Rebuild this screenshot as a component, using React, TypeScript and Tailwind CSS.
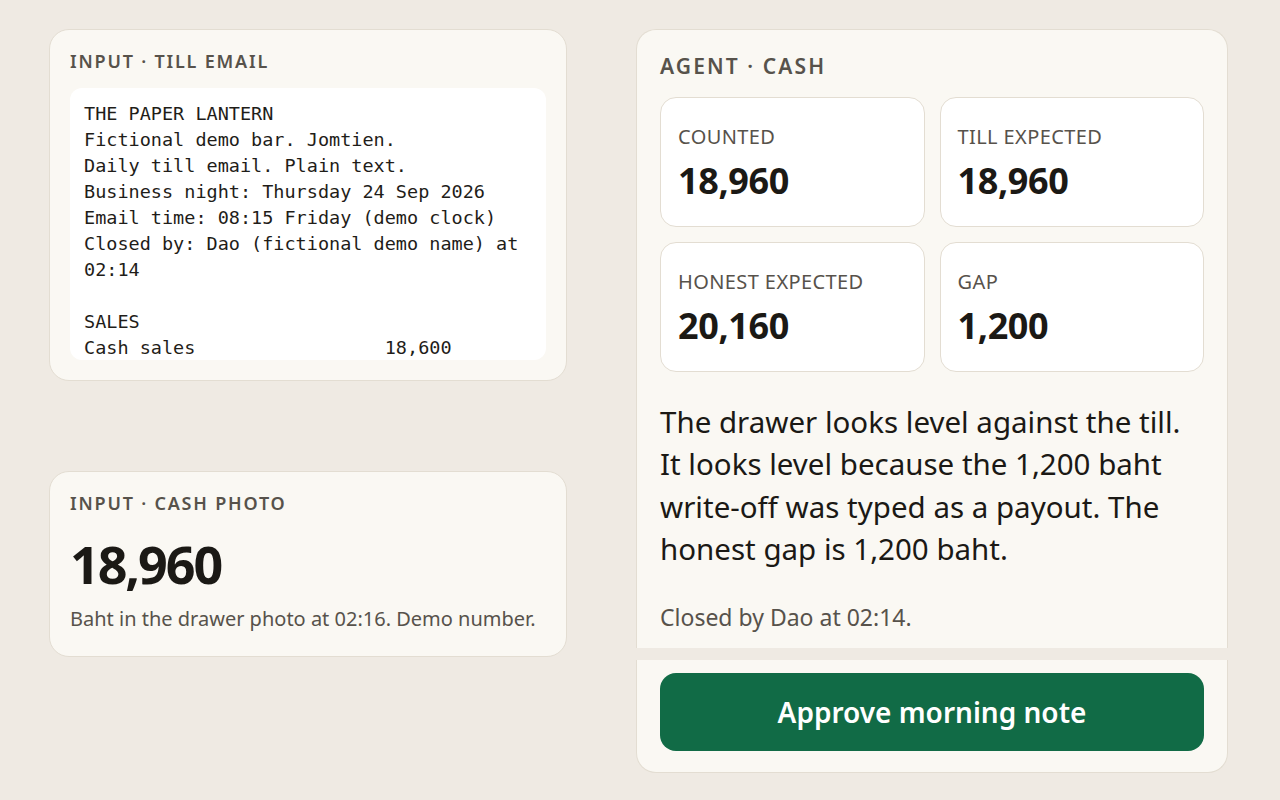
const tillEmail = `THE PAPER LANTERN
Fictional demo bar. Jomtien.
Daily till email. Plain text.
Business night: Thursday 24 Sep 2026
Email time: 08:15 Friday (demo clock)
Closed by: Dao (fictional demo name) at 02:14

SALES
Cash sales                 18,600
Card sales                 24,300
Total sales                42,900`;

const stats = [
  { label: "Counted", value: "18,960" },
  { label: "Till expected", value: "18,960" },
  { label: "Honest expected", value: "20,160" },
  { label: "Gap", value: "1,200" },
];

function Eyebrow({ children, size = "text-[18px]" }: { children: string; size?: string }) {
  return (
    <h2 className={`${size} font-semibold uppercase tracking-[0.1em] text-[#57524b]`}>
      {children}
    </h2>
  );
}

function StatTile({ label, value }: { label: string; value: string }) {
  return (
    <div className="flex h-[130px] flex-col rounded-2xl border border-[#e3ddd2] bg-white px-[17px] pt-[24px]">
      <div className="text-[20px] leading-[30px] uppercase tracking-[0.02em] text-[#57524b]">{label}</div>
      <div className="mt-[11px] text-[36px] font-bold leading-none tracking-[-0.01em] text-[#1b1915]">
        {value}
      </div>
    </div>
  );
}

export default function App() {
  return (
    <div
      className="flex min-h-[800px] gap-[69px] bg-[#efeae3] pl-[49px] pt-[29px]"
      style={{ fontFamily: '"Noto Sans", "Open Sans", sans-serif' }}
    >
      {/* inputs */}
      <div className="flex w-[518px] flex-col gap-[90px]">
        <section className="rounded-[20px] border border-[#e3ddd2] bg-[#faf8f3] px-[20px] pb-[20px] pt-[18px]">
          <Eyebrow>Input · Till email</Eyebrow>
          <pre
            className="mt-[13px] h-[272px] overflow-hidden whitespace-pre-wrap rounded-xl bg-white px-[14px] pt-[13px] text-[18.5px] leading-[26px] text-[#1f1d19]"
            style={{ fontFamily: '"DejaVu Sans Mono", "Liberation Mono", monospace' }}
          >
            {tillEmail}
          </pre>
        </section>

        <section className="rounded-[20px] border border-[#e3ddd2] bg-[#faf8f3] px-[20px] pb-[22px] pt-[18px]">
          <Eyebrow>Input · Cash photo</Eyebrow>
          <div className="mt-[15px] text-[52px] font-bold leading-[64px] tracking-[-0.04em] text-[#1b1915]">
            18,960
          </div>
          <p className="mt-[8px] text-[20px] leading-[30px] text-[#57524b]">
            Baht in the drawer photo at 02:16. Demo number.
          </p>
        </section>
      </div>

      {/* agent */}
      <div className="flex w-[592px] flex-col gap-[12px]">
        <section className="h-[619px] rounded-t-[20px] border-x border-t border-[#e3ddd2] bg-[#faf8f3] px-[23px] pt-[21px]">
          <Eyebrow size="text-[21px]">Agent · Cash</Eyebrow>
          <div className="mt-[14px] grid grid-cols-2 gap-[15px]">
            {stats.map((s) => (
              <StatTile key={s.label} label={s.label} value={s.value} />
            ))}
          </div>
          <p className="mt-[29px] text-[29.5px] leading-[42.5px] text-[#1b1915]">
            The drawer looks level against the till. It looks level because the 1,200 baht
            write-off was typed as a payout. The honest gap is 1,200 baht.
          </p>
          <p className="mt-[29px] text-[23px] leading-[34px] text-[#57524b]">Closed by Dao at 02:14.</p>
        </section>

        <div className="h-[113px] rounded-b-[20px] border-x border-b border-[#e3ddd2] bg-[#faf8f3] px-[23px] pt-[13px]">
          <button className="flex h-[78px] w-full items-center justify-center rounded-2xl bg-[#116b46] text-[28px] font-semibold text-white">
            Approve morning note
          </button>
        </div>
      </div>
    </div>
  );
}
